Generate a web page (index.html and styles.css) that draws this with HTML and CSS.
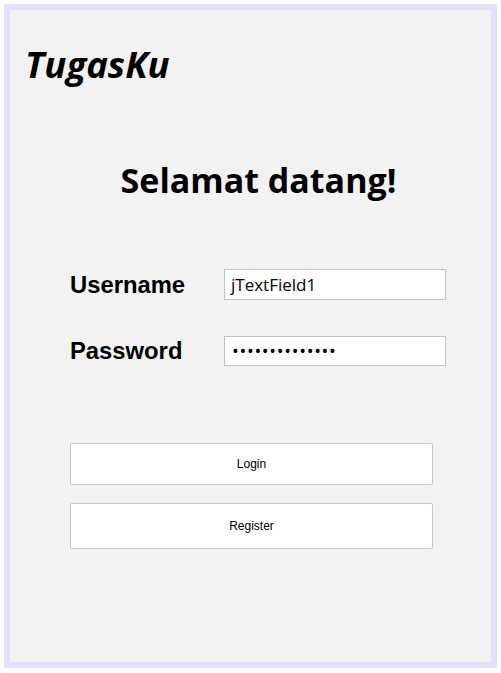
FILE: index.html
```html
<!DOCTYPE html>
<html>
<head>
<meta charset="utf-8">
<link rel="stylesheet" href="styles.css">
</head>
<body>
<div class="frame">
  <div class="panel">
    <div class="brand">TugasKu</div>
    <h1 class="welcome">Selamat datang!</h1>
    <div class="form">
      <div class="row">
        <label class="label">Username</label>
        <div class="field">jTextField1</div>
      </div>
      <div class="row row-pass">
        <label class="label">Password</label>
        <div class="field field-pass">••••••••••••••</div>
      </div>
    </div>
    <div class="buttons">
      <div class="btn btn-login">Login</div>
      <div class="btn btn-register">Register</div>
    </div>
  </div>
</div>
</body>
</html>
```
FILE: styles.css
```css
html, body {
  margin: 0;
  padding: 0;
  background: #ffffff;
}
.frame {
  margin: 4px;
  width: 481px;
  height: 652px;
  border: 6px solid #e1e1fb;
}
.panel {
  width: 100%;
  height: 100%;
  background: #f2f2f2;
  display: flex;
  flex-direction: column;
}
.brand {
  font-family: "Open Sans", sans-serif;
  font-weight: 700;
  font-style: italic;
  font-size: 36.5px;
  line-height: 40px;
  color: #000;
  margin: 34px 0 0 15px;
}
.welcome {
  font-family: "Open Sans", sans-serif;
  font-weight: 700;
  font-size: 34px;
  line-height: 40px;
  margin: 76px 0 0 0;
  text-align: center;
  padding-left: 16px;
  color: #000;
}
.form {
  margin: 69px 0 0 60px;
  display: flex;
  flex-direction: column;
  gap: 36px;
}
.row {
  display: flex;
  align-items: center;
}
.label {
  font-family: "Liberation Sans", Arial, sans-serif;
  font-weight: 700;
  font-size: 23.8px;
  width: 154px;
  color: #000;
}
.field {
  height: 29px;
  border: 1px solid #c3c3c3;
  background: #fff;
  font-family: "Open Sans", sans-serif;
  font-size: 17px;
  line-height: 29px;
  padding-left: 6px;
  width: 214px;
  color: #000;
}
.row-pass .field {
  height: 28px;
  line-height: 28px;
}
.field-pass {
  font-size: 18px;
  letter-spacing: 0.7px;
  padding-left: 7px;
  width: 213px;
}
.buttons {
  margin: 77px 0 0 60px;
  display: flex;
  flex-direction: column;
  gap: 18px;
}
.btn {
  width: 361px;
  background: #fff;
  border: 1px solid #c6c6c6;
  border-radius: 2px;
  font-family: "Liberation Sans", Arial, sans-serif;
  font-size: 12px;
  color: #000;
  display: flex;
  align-items: center;
  justify-content: center;
}
.btn-login {
  height: 40px;
}
.btn-register {
  height: 44px;
}
```
